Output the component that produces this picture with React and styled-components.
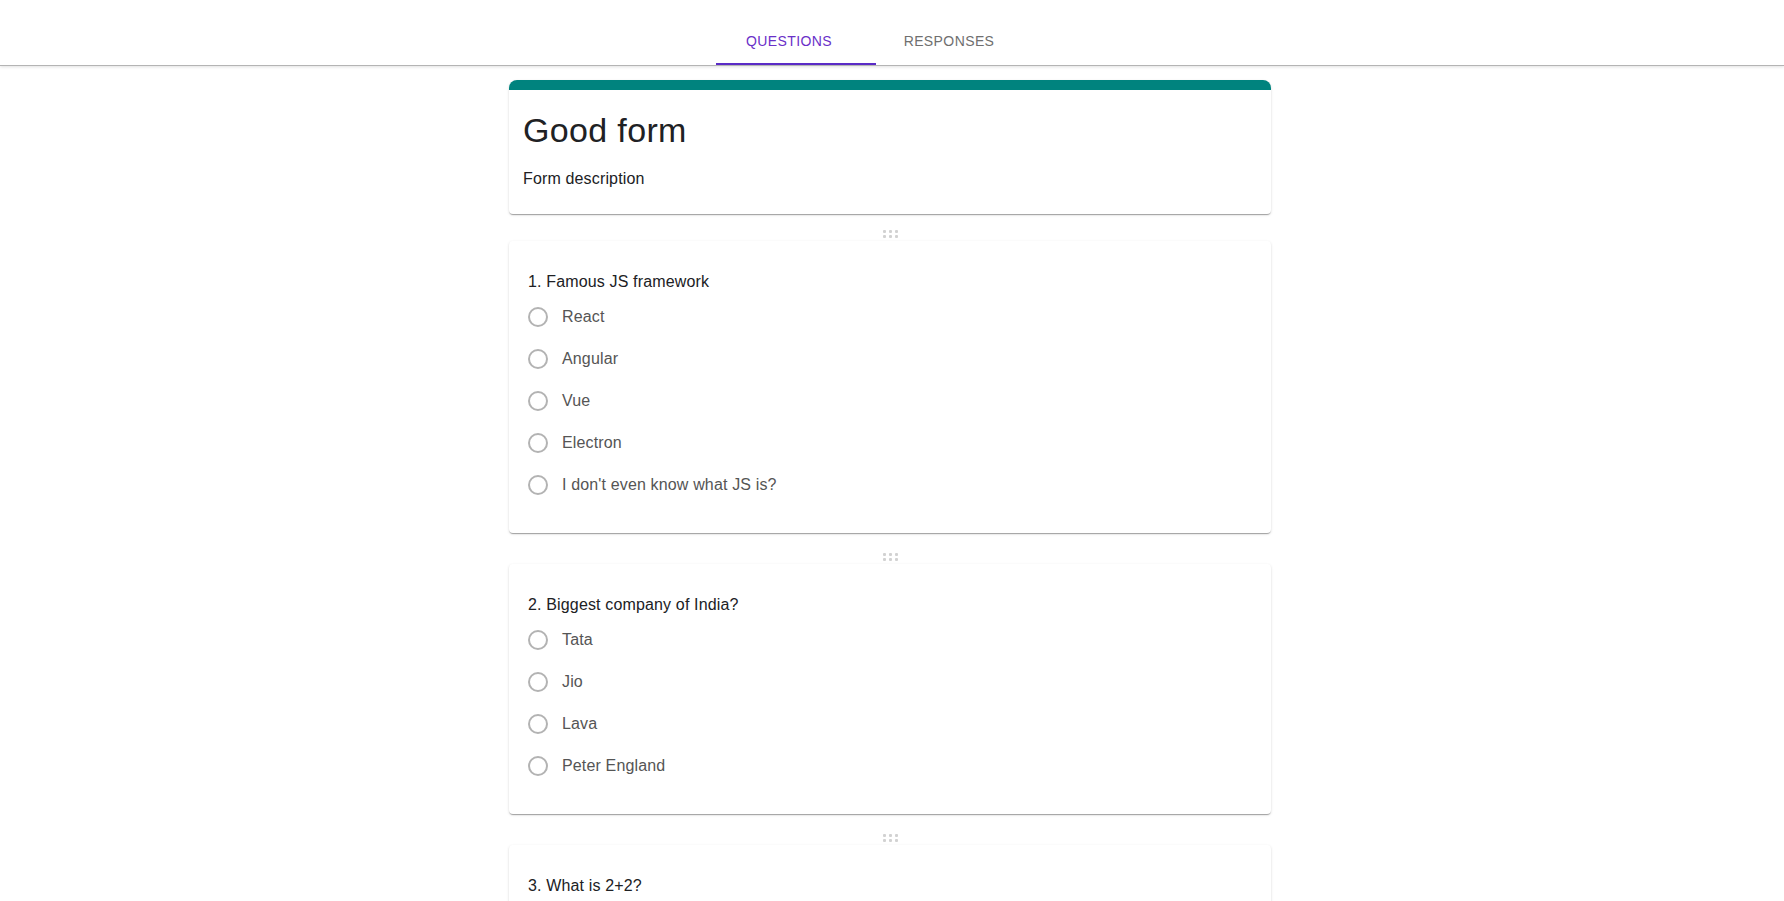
import React, { useState } from "react";
import styled, { createGlobalStyle } from "styled-components";

const questions = [
  {
    id: 1,
    title: "Famous JS framework",
    options: ["React", "Angular", "Vue", "Electron", "I don't even know what JS is?"],
  },
  {
    id: 2,
    title: "Biggest company of India?",
    options: ["Tata", "Jio", "Lava", "Peter England"],
  },
  {
    id: 3,
    title: "What is 2+2?",
    options: ["3", "4", "5", "22"],
  },
];

const App = () => {
  const [tab, setTab] = useState(0);

  return (
    <>
      <GlobalStyle />
      <Header>
        <Tabs>
          <Tab active={tab === 0} onClick={() => setTab(0)}>
            Questions
          </Tab>
          <Tab active={tab === 1} onClick={() => setTab(1)}>
            Responses
          </Tab>
        </Tabs>
      </Header>
      <Main>
        <Column>
          <HeadCard>
            <TopBar />
            <HeadBody>
              <FormTitle>Good form</FormTitle>
              <FormDescription>Form description</FormDescription>
            </HeadBody>
          </HeadCard>
          {questions.map((q, i) => {
            return (
              <Block key={q.id}>
                <Handle>
                  {[0, 1, 2, 3, 4, 5].map((d) => (
                    <Dot key={d} />
                  ))}
                </Handle>
                <Card>
                  <Question>
                    {i + 1}. {q.title}
                  </Question>
                  {q.options.map((op) => (
                    <Option key={op}>
                      <RadioBox>
                        <svg width="24" height="24" viewBox="0 0 24 24">
                          <circle
                            cx="12"
                            cy="12"
                            r="9"
                            fill="none"
                            stroke="#b3b3b3"
                            strokeWidth="2"
                          />
                        </svg>
                      </RadioBox>
                      <OptionText>{op}</OptionText>
                    </Option>
                  ))}
                </Card>
              </Block>
            );
          })}
        </Column>
      </Main>
    </>
  );
};

const GlobalStyle = createGlobalStyle`
  body {
    margin: 0;
    background: #ffffff;
    font-family: "Liberation Sans", Arial, Helvetica, sans-serif;
  }
`;

const Header = styled.div`
  padding-top: 17px;
  background: #fff;
  box-shadow: 0 1px 0 #b4b4b4, 0 2px 3px rgba(0, 0, 0, 0.12);
  position: relative;
  z-index: 1;
`;

const Tabs = styled.div`
  display: flex;
  justify-content: center;
  padding-right: 32px;
`;

const Tab = styled.div`
  width: 160px;
  height: 48px;
  box-sizing: border-box;
  display: flex;
  align-items: center;
  justify-content: center;
  font-size: 14px;
  font-weight: 400;
  letter-spacing: 0.4px;
  text-transform: uppercase;
  cursor: pointer;
  color: ${(p) => (p.active ? "#6a30c8" : "#6f6f6f")};
  border-bottom: 2px solid ${(p) => (p.active ? "#5a2bc6" : "transparent")};
  padding: 2px 14px 0 0;
`;

const Main = styled.div`
  display: flex;
  justify-content: center;
  padding: 15px 4px 40px 0;
`;

const Column = styled.div`
  width: 762px;
  display: flex;
  flex-direction: column;
`;

const HeadCard = styled.div`
  border-radius: 8px 8px 4px 4px;
  overflow: hidden;
  background: #fff;
  box-shadow: 0 2px 1px -1px rgba(0, 0, 0, 0.2), 0 1px 1px 0 rgba(0, 0, 0, 0.14),
    0 1px 3px 0 rgba(0, 0, 0, 0.12);
`;

const TopBar = styled.div`
  height: 10px;
  background: #00837e;
`;

const HeadBody = styled.div`
  padding: 20px 14px 23px;
`;

const FormTitle = styled.div`
  font-size: 34px;
  line-height: 41px;
  letter-spacing: 0.35px;
  color: #202124;
`;

const FormDescription = styled.div`
  margin-top: 16px;
  font-size: 16px;
  line-height: 24px;
  letter-spacing: 0.15px;
  color: #202124;
`;

const Block = styled.div`
  display: flex;
  flex-direction: column;
  margin-top: 16px;
  & + & {
    margin-top: 20px;
  }
`;

const Handle = styled.div`
  align-self: center;
  display: grid;
  grid-template-columns: repeat(3, 3px);
  gap: 2px 3px;
  margin-bottom: 3px;
`;

const Dot = styled.span`
  width: 3px;
  height: 3px;
  border-radius: 1px;
  background: #d2d2d2;
`;

const Card = styled.div`
  background: #fff;
  border-radius: 4px;
  padding: 29px 19px 27px;
  box-shadow: 0 2px 1px -1px rgba(0, 0, 0, 0.2), 0 1px 1px 0 rgba(0, 0, 0, 0.14),
    0 1px 3px 0 rgba(0, 0, 0, 0.12);
`;

const Question = styled.div`
  font-size: 16px;
  line-height: 24px;
  letter-spacing: 0.15px;
  color: #202124;
  margin-bottom: 2px;
`;

const Option = styled.label`
  display: flex;
  align-items: center;
  height: 42px;
  margin-left: -11px;
  cursor: pointer;
`;

const RadioBox = styled.span`
  width: 42px;
  height: 42px;
  display: flex;
  align-items: center;
  justify-content: center;
  svg {
    display: block;
  }
`;

const OptionText = styled.span`
  margin-left: 3px;
  font-size: 16px;
  line-height: 24px;
  letter-spacing: 0.15px;
  color: #555;
`;

export default App;
